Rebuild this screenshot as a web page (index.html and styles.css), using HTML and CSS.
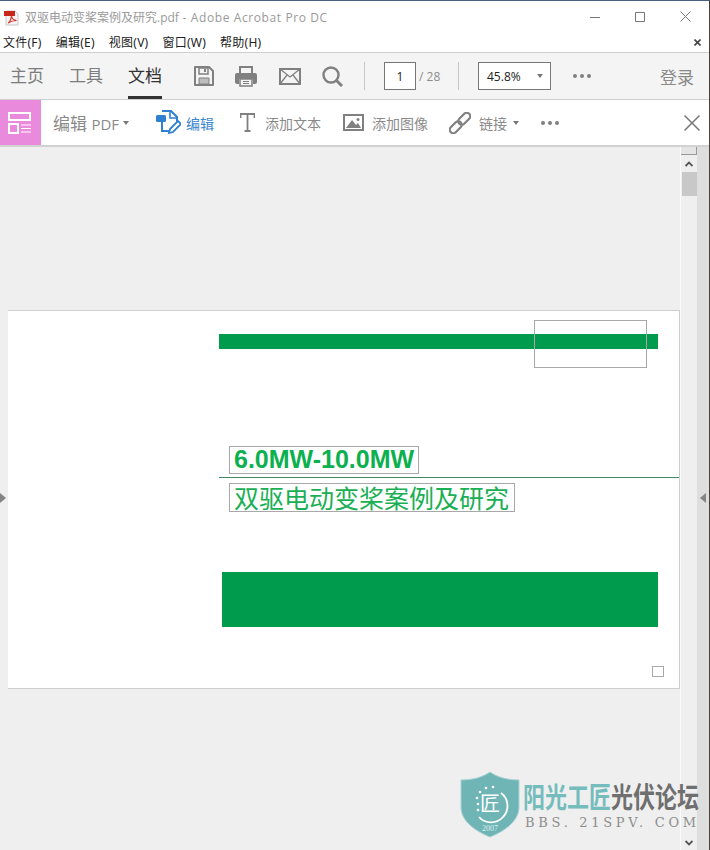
FILE: index.html
```html
<!DOCTYPE html>
<html lang="zh">
<head>
<meta charset="utf-8">
<title>Adobe Acrobat Pro DC</title>
<link rel="stylesheet" href="styles.css">
</head>
<body>
<div class="window">
  <header class="titlebar">
    <svg class="pdf-icon" width="16" height="16" viewBox="0 0 16 16"><path d="M2 1h9l3 3v11H2z" fill="#f4f4f4" stroke="#c8c8c8"/><path d="M0 1h11v5H0z" fill="#c8261c"/><path d="M4 13c2-1 3-4 3.500-7 .5 3 2 4 5 4.500-3 0-6 1-8.500 2.500z" fill="none" stroke="#d8342a" stroke-width="1.200"/></svg>
    <span class="title-text">双驱电动变桨案例及研究.pdf<span class="title-app"> - Adobe Acrobat Pro DC</span></span>
    <div class="win-controls">
      <svg width="10" height="10" viewBox="0 0 10 10"><path d="M0 5.500h10" stroke="#777"/></svg>
      <svg width="10" height="10" viewBox="0 0 10 10"><path d="M.5.500h9v9h-9z" fill="none" stroke="#777"/></svg>
      <svg width="11" height="11" viewBox="0 0 11 11"><path d="M.5.500l10 10M10.500.500l-10 10" stroke="#777" fill="none"/></svg>
    </div>
  </header>
  <nav class="menubar">
    <span>文件(F)</span><span>编辑(E)</span><span>视图(V)</span><span>窗口(W)</span><span>帮助(H)</span>
    <svg class="menu-close" width="7" height="7" viewBox="0 0 7 7"><path d="M.5.500l6 6M6.500.500l-6 6" stroke="#444" stroke-width="1.600"/></svg>
  </nav>
  <div class="toolbar">
    <div class="tabs">
      <span class="tab">主页</span><span class="tab">工具</span><span class="tab tab-active">文档</span>
    </div>
    <div class="tool-icons">
      <svg width="20" height="20" viewBox="0 0 20 20"><path d="M1 1h14l4 4v14H1z" fill="none" stroke="#808080" stroke-width="2" stroke-linejoin="round"/><path d="M5 2h9v6H5z" fill="none" stroke="#808080" stroke-width="1.500"/><path d="M10 3h2v3h-2z" fill="#808080"/><path d="M5 12h10v6H5z" fill="#bdbdbd" stroke="#808080"/></svg>
      <svg class="print-icon" width="22" height="21" viewBox="0 0 22 21"><path d="M5 7V1h12v6" fill="none" stroke="#808080" stroke-width="2"/><path d="M2 7h18a2 2 0 0 1 2 2v7a2 2 0 0 1-2 2h-2v-5H4v5H2a2 2 0 0 1-2-2V9a2 2 0 0 1 2-2z" fill="#808080"/><path d="M5 13h12v7H5z" fill="#f4f4f4" stroke="#808080" stroke-width="1.500"/><path d="M8 15.500h6M8 17.500h6" stroke="#808080"/></svg>
      <svg width="22" height="17" viewBox="0 0 22 17"><path d="M1 1h20v15H1z" fill="none" stroke="#808080" stroke-width="2"/><path d="M1 1l10 8 10-8M1 16l7-9M21 16l-7-9" fill="none" stroke="#808080" stroke-width="1.300"/></svg>
      <svg width="21" height="21" viewBox="0 0 21 21"><circle cx="9" cy="9" r="7.500" fill="none" stroke="#808080" stroke-width="2.400"/><path d="M14.500 14.500l5.500 5.500" stroke="#808080" stroke-width="3"/></svg>
    </div>
    <i class="divider divider-a"></i>
    <span class="field page-field">1</span>
    <span class="page-total">/ 28</span>
    <i class="divider divider-b"></i>
    <div class="field zoom-field"><span>45.8%</span><i class="caret"></i></div>
    <div class="dots dots-top"><i></i><i></i><i></i></div>
    <span class="login">登录</span>
  </div>
  <div class="editbar">
    <div class="pink-tile">
      <svg width="24" height="22" viewBox="0 0 24 22"><path d="M1 1h21v7H1zM1 12h9v9H1z" fill="none" stroke="#fff" stroke-width="2"/><path d="M13 13h10M13 16.500h10M13 20h10" stroke="#fff" stroke-width="1.200"/></svg>
    </div>
    <span class="edit-pdf">编辑 <span class="edit-pdf-latin">PDF</span></span><i class="caret caret-pdf"></i>
    <div class="edit-action">
      <svg width="25" height="25" viewBox="0 0 25 25"><path d="M6 1h9l6 6v6M6 11v10h7" fill="none" stroke="#2f80d0" stroke-width="2"/><path d="M14 1v7h7" fill="none" stroke="#2f80d0" stroke-width="1.600"/><rect x="0" y="5" width="10" height="7" rx="1.500" fill="#2f80d0"/><path d="M13 23l1-4 8-8 3 3-8 8z" fill="#fff" stroke="#2f80d0" stroke-width="1.800"/></svg>
      <span>编辑</span>
    </div>
    <div class="action act-text">
      <svg width="15" height="19" viewBox="0 0 15 19"><path d="M.5 5V1h14v4M7.500 1v17M4.500 18h6" fill="none" stroke="#808080" stroke-width="1.800"/></svg>
      <span>添加文本</span>
    </div>
    <div class="action act-image">
      <svg width="21" height="17" viewBox="0 0 21 17"><path d="M1 1h19v15H1z" fill="none" stroke="#808080" stroke-width="2"/><path d="M3 14l6-8 4 5 2-2 3 5z" fill="#808080"/><circle cx="15" cy="5.500" r="1.500" fill="#808080"/></svg>
      <span>添加图像</span>
    </div>
    <div class="action act-link">
      <svg width="22" height="22" viewBox="0 0 22 22"><g transform="rotate(-45 11 11)" fill="none" stroke="#808080" stroke-width="2.200"><rect x="-2" y="7.500" width="14" height="7" rx="3.500"/><rect x="10" y="7.500" width="14" height="7" rx="3.500"/></g></svg>
      <span>链接</span><i class="caret caret-link"></i>
    </div>
    <div class="dots dots-edit"><i></i><i></i><i></i></div>
    <svg class="edit-close" width="16" height="16" viewBox="0 0 16 16"><path d="M.5.500l15 15M15.500.500l-15 15" stroke="#777" stroke-width="1.500"/></svg>
  </div>
  <main class="workspace">
    <div class="viewer">
      <section class="page">
        <div class="bar-top"></div>
        <div class="box box-title"><span>6.0MW-10.0MW</span></div>
        <div class="rule"></div>
        <div class="box box-sub"><span>双驱电动变桨案例及研究</span></div>
        <div class="bar-bottom"></div>
        <div class="tiny-box"></div>
        <div class="select-box"></div>
      </section>
      <i class="handle handle-left"></i>
      <i class="handle handle-right"></i>
    </div>
    <aside class="scrollbar">
      <div class="scroll-cap"></div>
      <svg class="scroll-up" width="8" height="6" viewBox="0 0 8 6"><path d="M.5 5L4 1.500 7.500 5" fill="none" stroke="#555" stroke-width="1.800"/></svg>
      <div class="scroll-thumb"></div>
      <svg class="scroll-down" width="8" height="6" viewBox="0 0 8 6"><path d="M.5 1L4 4.500 7.500 1" fill="none" stroke="#555" stroke-width="1.800"/></svg>
    </aside>
    <div class="track"></div>
    <div class="watermark">
      <svg class="shield" width="60" height="67" viewBox="0 0 60 67">
        <path d="M30 1c7 5 17 8 29 8v27c0 14-14 24-29 30C15 60 1 50 1 36V9c12 0 22-3 29-8z" fill="#6fb5b6" stroke="#a9d2d3"/>
        <path d="M41 22a16 16 0 0 1 2 24 16 16 0 0 1-24 0" fill="none" stroke="#fff" stroke-width="1.800"/>
        <g fill="#fff"><circle cx="18" cy="33" r="1.300"/><circle cx="17" cy="27" r="1.300"/><circle cx="20" cy="21" r="1.300"/><circle cx="26" cy="17" r="1.300"/><circle cx="33" cy="16" r="1.300"/><circle cx="18" cy="39" r="1.300"/></g>
        <text x="30" y="40" class="shield-glyph">匠</text>
        <text x="30" y="60" class="shield-year">2007</text>
      </svg>
      <div class="wm-text">
        <div class="wm-name"><span class="wm-teal">阳光工匠</span><span class="wm-gray">光伏论坛</span></div>
        <div class="wm-url">BBS. 21SPV. COM</div>
      </div>
    </div>
  </main>
</div>
</body>
</html>
```
FILE: styles.css
```css
* { box-sizing: border-box; }
html, body { margin: 0; padding: 0; }
body { width: 710px; height: 850px; overflow: hidden; background: #fff; font-family: "Open Sans", "Noto Sans CJK SC", sans-serif; }
i { display: block; }
.window { position: relative; width: 710px; height: 850px; display: flex; flex-direction: column; border-top: 1px solid #47617c; border-right: 1px solid #4a4038; }

.titlebar { height: 32px; display: flex; align-items: center; padding-left: 4px; background: #fff; }
.pdf-icon { flex: none; margin-top: 1px; }
.title-text { margin-left: 5px; font-size: 12px; color: #9a9a9a; white-space: nowrap; }
.title-app { letter-spacing: .6px; }
.win-controls { margin-left: auto; margin-right: 18px; display: flex; gap: 35px; align-items: center; margin-top: -1px; }

.menubar { height: 20px; display: flex; align-items: center; gap: 14px; padding-left: 3px; font-size: 12px; letter-spacing: .25px; color: #222; background: #fff; border-bottom: 1px solid #cfcfcf; white-space: nowrap; font-family: "Noto Sans", "Noto Sans CJK SC", sans-serif; }
.menubar span { line-height: 18px; }
.menu-close { margin-left: auto; margin-right: 8px; }

.toolbar { height: 47px; display: flex; align-items: center; background: #f4f4f4; border-bottom: 1px solid #cfcfcf; }
.tabs { display: flex; height: 46px; align-items: center; padding-left: 10px; }
.tab { position: relative; font-size: 17px; color: #7d7d7d; margin-right: 25px; line-height: 46px; white-space: nowrap; }
.tab-active { color: #333; margin-right: 0; border-bottom: 3px solid #333; height: 46px; line-height: 46px; }
.tool-icons { display: flex; align-items: center; gap: 21px; margin-left: 32px; }
.print-icon { margin-right: 1px; }
.divider { width: 1px; height: 28px; background: #c8c8c8; }
.divider-a { margin-left: 21px; }
.divider-b { margin-left: 19px; }
.field { height: 28px; background: #fff; border: 1px solid #777; font-size: 12px; color: #222; display: flex; align-items: center; }
.page-field { width: 32px; margin-left: 19px; justify-content: center; }
.page-total { margin-left: 3px; font-size: 12px; color: #8c8c8c; width: 20px; white-space: nowrap; }
.zoom-field { width: 73px; margin-left: 19px; padding-left: 8px; }
.caret { width: 0; height: 0; border-left: 3.500px solid transparent; border-right: 3.500px solid transparent; border-top: 4px solid #777; }
.zoom-field .caret { margin-left: auto; margin-right: 7px; }
.dots { display: flex; gap: 3px; }
.dots i { width: 4px; height: 4px; border-radius: 50%; background: #808080; }
.dots-top { margin-left: 22px; }
.login { margin-left: auto; margin-right: 15px; font-size: 17px; color: #8a8a8a; }

.editbar { height: 47px; display: flex; align-items: center; background: #fff; border-bottom: 2px solid #d2d2d2; color: #8a8a8a; font-size: 14px; white-space: nowrap; }
.pink-tile { width: 41px; height: 45px; padding-right: 2px; background: #ea8adc; display: flex; align-items: center; justify-content: center; }
.edit-pdf { margin-left: 12px; font-size: 17px; color: #8a8a8a; width: 66px; }
.edit-pdf-latin { font-size: 15px; }
.caret-pdf { margin-left: 4px; }
.edit-action { display: flex; align-items: center; gap: 5px; margin-left: 27px; color: #3b86d1; }
.action { display: flex; align-items: center; }
.act-text { margin-left: 26px; gap: 10px; }
.act-image { margin-left: 22px; gap: 8px; }
.act-link { margin-left: 21px; gap: 8px; }
.caret-link { margin-left: -2px; }
.dots-edit { margin-left: 22px; }
.edit-close { margin-left: auto; margin-right: 9px; }

.workspace { position: relative; flex: 1; display: flex; background: #efefef; min-height: 0; }
.viewer { position: relative; flex: 1; padding-top: 163px; padding-left: 8px; }
.page { position: relative; height: 379px; width: 672px; background: #fff; border-top: 1px solid #cdcdcd; border-right: 1px solid #cdcdcd; border-bottom: 1px solid #cdcdcd; padding-top: 23px; }
.bar-top { width: 439px; height: 15px; margin-left: 211px; background: #009b4d; }
.box { width: fit-content; margin-left: 221px; border: 1px solid #a8a8a8; padding-left: 4px; padding-right: 4px; color: #0bb04f; font-size: 25px; font-family: "Liberation Sans", "Noto Sans CJK SC", sans-serif; white-space: nowrap; }
.box-title { height: 28px; margin-top: 97px; font-weight: 700; line-height: 24px; }
.rule { height: 1px; margin-top: 3px; margin-left: 211px; background: #3d8a62; }
.box-sub { height: 29px; margin-top: 5px; padding-right: 5px; line-height: 27px; color: #1aaf54; font-family: "Noto Sans CJK SC", sans-serif; }
.bar-bottom { width: 436px; height: 55px; margin-top: 60px; margin-left: 214px; background: #009b4d; }
.tiny-box { width: 12px; height: 11px; margin-top: 39px; margin-left: 644px; border: 1px solid #a8a8a8; }
.select-box { position: absolute; left: 526px; top: 9px; width: 113px; height: 48px; border: 1px solid #a8a8a8; }
.handle { position: absolute; top: 346px; width: 0; height: 0; border-top: 5px solid transparent; border-bottom: 5px solid transparent; }
.handle-left { left: 0; border-left: 6px solid #858585; }
.handle-right { left: 700px; border-right: 6px solid #858585; z-index: 2; }

.scrollbar { position: relative; width: 17px; flex: none; background: #efefef; border-left: 1px solid #fbfbfb; display: flex; flex-direction: column; align-items: center; }
.scroll-cap { width: 16px; height: 8px; background: #e4e4e4; border-right: 1px solid #999; border-bottom: 1px solid #999; }
.scroll-up { margin-top: 6px; }
.scroll-thumb { width: 15px; height: 24px; margin-top: 5px; background: #c8c8c8; }
.scroll-down { margin-top: auto; margin-bottom: 4px; }
.track { width: 12px; flex: none; background: #dedede; }

.watermark { position: absolute; left: 460px; top: 624px; display: flex; gap: 3px; }
.shield { flex: none; display: block; }
.shield-glyph { font-size: 20px; fill: #fff; text-anchor: middle; font-family: "Noto Sans CJK SC", sans-serif; }
.shield-year { font-size: 8px; fill: #dff0f0; text-anchor: middle; font-family: "Liberation Serif", serif; }
.wm-text { display: flex; flex-direction: column; padding-top: 12px; }
.wm-name { display: flex; height: 24px; font-family: "Noto Sans CJK SC", sans-serif; font-size: 22px; line-height: 24px; font-weight: 700; white-space: nowrap; transform: scaleY(1.3); }
.wm-teal { color: #75bcbd; }
.wm-gray { color: #6f6f6f; }
.wm-url { margin-top: 9px; margin-left: 2px; font-family: "DejaVu Serif", serif; font-size: 13px; line-height: 14px; letter-spacing: 3.700px; color: #8d8d8d; white-space: nowrap; }
```
